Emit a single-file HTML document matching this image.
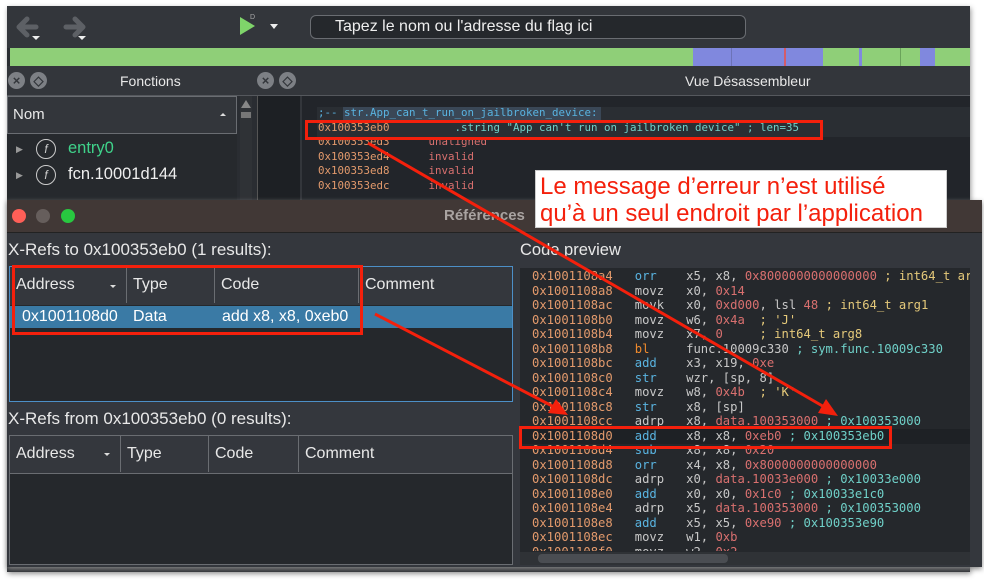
<!DOCTYPE html>
<html><head><meta charset="utf-8"><style>
*{margin:0;padding:0;box-sizing:border-box}
body{width:984px;height:580px;background:#fff;position:relative;overflow:hidden;font-family:"Liberation Sans",sans-serif}
.a{position:absolute}
.m{font-family:"DejaVu Sans Mono","Liberation Mono",monospace;font-size:10.8px;white-space:pre;line-height:14.5px}
.t{color:#e8e8e8;font-size:14px}
.or{color:#e39a6c}.bl{color:#59b3e0}.gr{color:#c8c8c8}.rd{color:#d9706f}.cy{color:#6fd0c8}.yl{color:#e5c97a}.og{color:#ef8a2c}
.hc{position:absolute;top:0;height:36px;border-right:1px solid #6a6d72;padding:9px 6px;color:#e8e8e8;font-size:16px}
.circ{position:absolute;width:17px;height:17px;border-radius:50%;background:#7d8085;color:#33363b;font-size:13px;line-height:17px;text-align:center;font-weight:bold}
</style></head><body>
<div class="a" style="left:7px;top:6px;width:963px;height:566px;background:#2a2d32;box-shadow:1px 2px 5px #999"></div>
<!-- toolbar -->
<div class="a" style="left:7px;top:6px;width:963px;height:42px;background:#33363b"></div>
<svg class="a" style="left:14px;top:14px" width="80" height="30">
<g fill="none" stroke="#5d6065" stroke-width="5" stroke-linecap="round" stroke-linejoin="round">
<path d="M6 13 H22 M13 5 L5 13 L13 21"/>
<path d="M52 13 H68 M61 5 L69 13 L61 21"/>
</g>
<polygon points="18,22 26,22 22,26" fill="#eee"/>
<polygon points="64,22 72,22 68,26" fill="#eee"/>
</svg>
<div class="a" style="left:240px;top:17px;width:0;height:0;border-top:9px solid transparent;border-bottom:9px solid transparent;border-left:15px solid #7fd46a"></div>
<div class="a" style="left:250px;top:14px;color:#aaa;font-size:7px">D</div>
<div class="a" style="left:270px;top:24px;width:0;height:0;border-left:4px solid transparent;border-right:4px solid transparent;border-top:5px solid #eee"></div>
<div class="a" style="left:310px;top:15px;width:436px;height:24px;border:1px solid #6a6d72;border-radius:6px;background:#25282c;color:#eee;font-size:16px;padding:2px 24px">Tapez le nom ou l'adresse du flag ici</div>
<!-- green bar -->
<div class="a" style="left:10px;top:48px;width:960px;height:18px;background:#8fcf78"></div>
<div class="a" style="left:693px;top:48px;width:130px;height:18px;background:#8088de"></div>
<div class="a" style="left:731px;top:48px;width:1px;height:18px;background:#6c73b8"></div>
<div class="a" style="left:784px;top:48px;width:2px;height:18px;background:#d45c6a"></div>
<div class="a" style="left:859px;top:48px;width:3px;height:18px;background:#8088de"></div>
<div class="a" style="left:900px;top:48px;width:1px;height:18px;background:#6aa35a"></div>
<div class="a" style="left:920px;top:48px;width:15px;height:18px;background:#8088de"></div>
<!-- panel headers -->
<div class="a" style="left:7px;top:66px;width:963px;height:30px;background:#33363b;border-bottom:1px solid #55585d"></div>
<div class="circ" style="left:8px;top:72px">×</div><div class="circ" style="left:30px;top:72px">◇</div>
<div class="circ" style="left:257px;top:72px">×</div><div class="circ" style="left:279px;top:72px">◇</div>
<div class="a t" style="left:120px;top:73px;font-size:14px">Fonctions</div>
<div class="a t" style="left:685px;top:73px;font-size:14px">Vue Désassembleur</div>
<!-- functions panel -->
<div class="a" style="left:7px;top:96px;width:230px;height:110px;background:#26292d"></div>
<div class="a" style="left:7px;top:96px;width:230px;height:38px;background:#33363b;border:1px solid #6a6d72"></div>
<div class="a t" style="left:13px;top:106px;font-size:15px">Nom</div>
<div class="a" style="left:220px;top:113px;width:0;height:0;border-left:3px solid transparent;border-right:3px solid transparent;border-bottom:3px solid #ddd"></div>
<div class="a" style="left:240px;top:96px;width:12px;height:110px;background:#2f3236"></div>
<div class="a" style="left:241px;top:100px;width:0;height:0;border-left:5px solid transparent;border-right:5px solid transparent;border-bottom:8px solid #888"></div>
<div class="a" style="left:241px;top:112px;width:10px;height:6px;background:#777"></div>
<div class="a" style="left:16px;top:144px;color:#999;font-size:9px">&#9654;</div>
<div class="a" style="left:16px;top:170px;color:#999;font-size:9px">&#9654;</div>
<div class="a" style="left:36px;top:139px;width:20px;height:20px;border:1px solid #ccc;border-radius:50%;color:#ccc;font-size:12px;text-align:center;line-height:18px;font-style:italic">f</div>
<div class="a" style="left:36px;top:165px;width:20px;height:20px;border:1px solid #ccc;border-radius:50%;color:#ccc;font-size:12px;text-align:center;line-height:18px;font-style:italic">f</div>
<div class="a" style="left:68px;top:139px;color:#3fd28a;font-size:16.5px">entry0</div>
<div class="a" style="left:68px;top:165px;color:#eee;font-size:16.5px">fcn.10001d144</div>
<!-- disasm -->
<div class="a" style="left:257px;top:96px;width:713px;height:110px;background:#22252a;border-left:1px solid #555"></div>
<div class="a" style="left:258px;top:96px;width:44px;height:110px;background:#1d2024;border-right:2px solid #33363b"></div>
<div class="a" style="left:317px;top:107px;width:653px;height:30px;background:#2a2e33"></div>
<div class="a" style="left:343px;top:107px;width:258px;height:14px;background:#3a4756"></div>
<div class="a m" style="left:318px;top:106px"><span class="bl">;-- str.App_can_t_run_on_jailbroken_device:</span>
<span class="or">0x100353eb0</span>          <span class="cy">.string "App can't run on jailbroken device" ; len=35</span>
<span class="or">0x100353ed3</span>      <span class="rd">unaligned</span>
<span class="or">0x100353ed4</span>      <span class="rd">invalid</span>
<span class="or">0x100353ed8</span>      <span class="rd">invalid</span>
<span class="or">0x100353edc</span>      <span class="rd">invalid</span></div>
<!-- references window -->
<div class="a" style="left:7px;top:200px;width:975px;height:367px;background:#34373d;box-shadow:0 2px 5px #888"></div>
<div class="a" style="left:7px;top:200px;width:975px;height:33px;background:#413836;border-bottom:1px solid #222"></div>
<div class="a" style="left:12px;top:209px;width:14px;height:14px;border-radius:50%;background:#fe5f57"></div>
<div class="a" style="left:36px;top:209px;width:14px;height:14px;border-radius:50%;background:#665e5c"></div>
<div class="a" style="left:61px;top:209px;width:14px;height:14px;border-radius:50%;background:#28c840"></div>
<div class="a" style="left:444px;top:207px;color:#a9a3a1;font-size:15px;font-weight:bold">Références</div>
<div class="a t" style="left:8px;top:240px;font-size:17px">X-Refs to 0x100353eb0 (1 results):</div>
<div class="a" style="left:9px;top:266px;width:504px;height:136px;background:#25282c;border:1px solid #4c8fc7"></div>
<div class="a" style="left:10px;top:267px;width:502px;height:38px;background:#34373d"></div>
<div class="hc" style="left:10px;top:267px;width:117px">Address</div>
<div class="hc" style="left:127px;top:267px;width:88px">Type</div>
<div class="hc" style="left:215px;top:267px;width:144px">Code</div>
<div class="hc" style="left:359px;top:267px;width:153px;border:0">Comment</div>
<div class="a" style="left:110px;top:285px;width:0;height:0;border-left:3px solid transparent;border-right:3px solid transparent;border-top:3px solid #ddd"></div>
<div class="a" style="left:10px;top:306px;width:502px;height:22px;background:#3a7aa5"></div>
<div class="a" style="left:22px;top:308px;color:#fff;font-size:16px">0x1001108d0</div>
<div class="a" style="left:133px;top:308px;color:#fff;font-size:16px">Data</div>
<div class="a" style="left:222px;top:308px;color:#fff;font-size:16px">add x8, x8, 0xeb0</div>
<div class="a t" style="left:8px;top:409px;font-size:17px">X-Refs from 0x100353eb0 (0 results):</div>
<div class="a" style="left:9px;top:435px;width:504px;height:130px;background:#25282c;border:1px solid #6a6d72"></div>
<div class="a" style="left:10px;top:436px;width:502px;height:38px;background:#34373d;border-bottom:1px solid #6a6d72"></div>
<div class="hc" style="left:10px;top:436px;width:111px">Address</div>
<div class="hc" style="left:121px;top:436px;width:88px">Type</div>
<div class="hc" style="left:209px;top:436px;width:90px">Code</div>
<div class="hc" style="left:299px;top:436px;width:210px;border:0">Comment</div>
<div class="a" style="left:104px;top:453px;width:0;height:0;border-left:3px solid transparent;border-right:3px solid transparent;border-top:3px solid #ddd"></div>
<div class="a t" style="left:520px;top:241px;font-size:16.5px">Code preview</div>
<div class="a" style="left:520px;top:268px;width:450px;height:292px;background:#25282c"></div>
<div class="a" style="left:520px;top:429px;width:450px;height:15px;background:#1e2125"></div>
<div class="a" style="left:520px;top:552px;width:450px;height:13px;background:#2f3236"></div>
<div class="a" style="left:538px;top:554px;width:190px;height:9px;border-radius:4px;background:#4a4d52"></div>
<div class="a m" style="left:532px;top:269px;width:438px;height:282px;overflow:hidden;font-size:12.2px"><span class="or">0x1001108a4</span>   <span class="bl">orr</span>    <span class="gr">x5, x8,</span> <span class="rd">0x8000000000000000</span> <span class="yl">; int64_t arg6</span>
<span class="or">0x1001108a8</span>   <span class="gr">movz</span>   <span class="gr">x0,</span> <span class="rd">0x14</span>
<span class="or">0x1001108ac</span>   <span class="gr">movk</span>   <span class="gr">x0,</span> <span class="rd">0xd000</span><span class="gr">, lsl</span> <span class="rd">48</span> <span class="yl">; int64_t arg1</span>
<span class="or">0x1001108b0</span>   <span class="gr">movz</span>   <span class="gr">w6,</span> <span class="rd">0x4a</span>  <span class="yl">; 'J'</span>
<span class="or">0x1001108b4</span>   <span class="gr">movz</span>   <span class="gr">x7,</span> <span class="rd">0</span>     <span class="yl">; int64_t arg8</span>
<span class="or">0x1001108b8</span>   <span class="og">bl</span>     <span class="gr">func.10009c330</span> <span class="cy">; sym.func.10009c330</span>
<span class="or">0x1001108bc</span>   <span class="bl">add</span>    <span class="gr">x3, x19,</span> <span class="rd">0xe</span>
<span class="or">0x1001108c0</span>   <span class="bl">str</span>    <span class="gr">wzr, [sp, 8]</span>
<span class="or">0x1001108c4</span>   <span class="gr">movz</span>   <span class="gr">w8,</span> <span class="rd">0x4b</span>  <span class="yl">; 'K'</span>
<span class="or">0x1001108c8</span>   <span class="bl">str</span>    <span class="gr">x8, [sp]</span>
<span class="or">0x1001108cc</span>   <span class="gr">adrp</span>   <span class="gr">x8,</span> <span class="rd">data.100353000</span> <span class="cy">; 0x100353000</span>
<span class="or">0x1001108d0</span>   <span class="bl">add</span>    <span class="gr">x8, x8,</span> <span class="rd">0xeb0</span> <span class="cy">; 0x100353eb0</span>
<span class="or">0x1001108d4</span>   <span class="bl">sub</span>    <span class="gr">x8, x8,</span> <span class="rd">0x20</span>
<span class="or">0x1001108d8</span>   <span class="bl">orr</span>    <span class="gr">x4, x8,</span> <span class="rd">0x8000000000000000</span>
<span class="or">0x1001108dc</span>   <span class="gr">adrp</span>   <span class="gr">x0,</span> <span class="rd">data.10033e000</span> <span class="cy">; 0x10033e000</span>
<span class="or">0x1001108e0</span>   <span class="bl">add</span>    <span class="gr">x0, x0,</span> <span class="rd">0x1c0</span> <span class="cy">; 0x10033e1c0</span>
<span class="or">0x1001108e4</span>   <span class="gr">adrp</span>   <span class="gr">x5,</span> <span class="rd">data.100353000</span> <span class="cy">; 0x100353000</span>
<span class="or">0x1001108e8</span>   <span class="bl">add</span>    <span class="gr">x5, x5,</span> <span class="rd">0xe90</span> <span class="cy">; 0x100353e90</span>
<span class="or">0x1001108ec</span>   <span class="gr">movz</span>   <span class="gr">w1,</span> <span class="rd">0xb</span>
<span class="or">0x1001108f0</span>   <span class="gr">movz</span>   <span class="gr">w2,</span> <span class="rd">0x2</span></div>
<!-- annotation -->
<div class="a" style="left:535px;top:170px;width:412px;height:58px;background:#fff;border:1px solid #ccc;color:#f4200c;font-size:24px;line-height:27px;padding:2px 4px;white-space:nowrap">Le message d’erreur n’est utilisé<br>qu’à un seul endroit par l’application</div>
<!-- red boxes -->
<div class="a" style="left:305px;top:120px;width:518px;height:20px;border:3px solid #f4200c"></div>
<div class="a" style="left:12px;top:265px;width:351px;height:70px;border:3px solid #f4200c"></div>
<div class="a" style="left:519px;top:426px;width:373px;height:23px;border:3px solid #f4200c"></div>
<svg class="a" style="left:0;top:0" width="984" height="580">
<g stroke="#f4200c" stroke-width="3" fill="#f4200c">
<line x1="368" y1="143" x2="826" y2="408"/>
<polygon points="838,416 818,413 826,399" stroke="none"/>
<line x1="375" y1="314" x2="556" y2="408"/>
<polygon points="568,415 548,413 556,399" stroke="none"/>
</g></svg>
</body></html>
